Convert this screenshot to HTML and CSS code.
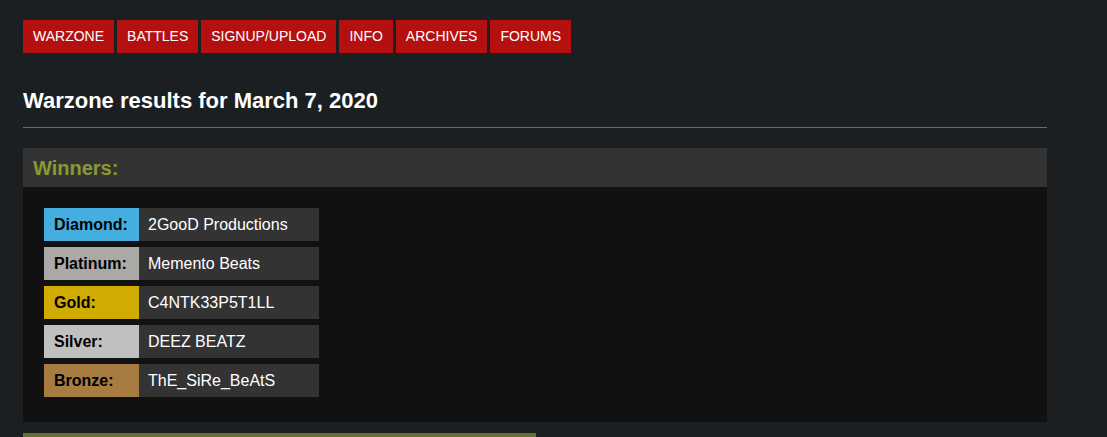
FILE: index.html
```html
<!DOCTYPE html>
<html lang="en">
<head>
    <meta charset="UTF-8">
    <meta name="viewport" content="width=device-width, initial-scale=1.0">
    <title>Warzone results</title>
    <link rel="stylesheet" href="styles.css">
</head>
<body>
    <div id="page">
        <div id="nav">
            <a class="nav-btn" href="#">WARZONE</a>
            <a class="nav-btn" href="#">BATTLES</a>
            <a class="nav-btn" href="#">SIGNUP/UPLOAD</a>
            <a class="nav-btn" href="#">INFO</a>
            <a class="nav-btn" href="#">ARCHIVES</a>
            <a class="nav-btn" href="#">FORUMS</a>
        </div>

        <h1 class="title">Warzone results for March 7, 2020</h1>
        <hr class="divider">

        <div class="panel">
            <div class="panel-head">Winners:</div>
            <div class="panel-body">
                <div class="winner">
                    <span class="rank diamond">Diamond:</span>
                    <span class="name">2GooD Productions</span>
                </div>
                <div class="winner">
                    <span class="rank platinum">Platinum:</span>
                    <span class="name">Memento Beats</span>
                </div>
                <div class="winner">
                    <span class="rank gold">Gold:</span>
                    <span class="name">C4NTK33P5T1LL</span>
                </div>
                <div class="winner">
                    <span class="rank silver">Silver:</span>
                    <span class="name">DEEZ BEATZ</span>
                </div>
                <div class="winner">
                    <span class="rank bronze">Bronze:</span>
                    <span class="name">ThE_SiRe_BeAtS</span>
                </div>
            </div>
        </div>

        <div class="next-bar"></div>
    </div>
</body>
</html>
```

FILE: styles.css
```css
body{
    margin: 0;
    background-color: #1c1f22;
    font-family: "Liberation Sans", Arial, sans-serif;
    color: #fff;
}
#page{
    width: 1024px;
    padding: 20px 0 0 23px;
}
#nav{
    display: flex;
    gap: 3px;
}
.nav-btn{
    display: block;
    background-color: #b51010;
    color: #fff;
    text-decoration: none;
    font-size: 14px;
    line-height: 17px;
    padding: 8px 10px;
}
.title{
    font-size: 22px;
    font-weight: bold;
    line-height: 25px;
    margin: 35px 0 14px 0;
}
.divider{
    border: 0;
    border-top: 1px solid #6a6a6a;
    margin: 0 0 20px 0;
}
.panel-head{
    background-color: #333;
    color: #8a9a32;
    font-size: 20px;
    font-weight: bold;
    line-height: 23px;
    padding: 9px 10px 7px 10px;
}
.panel-body{
    background-color: #111;
    padding: 21px 21px 25px 21px;
    display: flex;
    flex-direction: column;
    gap: 6px;
}
.winner{
    display: flex;
    height: 33px;
}
.rank{
    width: 85px;
    padding-left: 10px;
    color: #000;
    font-size: 16px;
    font-weight: bold;
    line-height: 33px;
}
.name{
    width: 171px;
    padding-left: 9px;
    background-color: #333;
    font-size: 16px;
    line-height: 33px;
}
.diamond{ background-color: #44aee0; }
.platinum{ background-color: #aaa9a5; }
.gold{ background-color: #d0ab00; }
.silver{ background-color: #c0c0c0; }
.bronze{ background-color: #a67c40; }
.next-bar{
    margin-top: 11px;
    width: 513px;
    height: 40px;
    background-color: #636f2a;
}
```
